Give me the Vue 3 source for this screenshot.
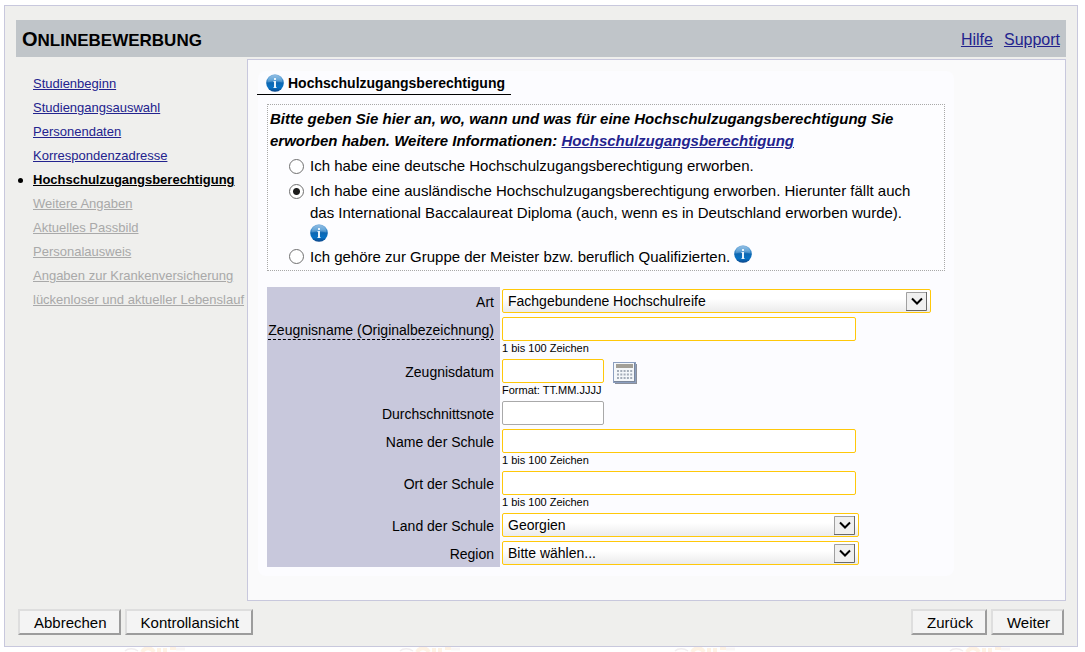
<script setup>
import { reactive, ref } from 'vue'

const steps = [
  { label: 'Studienbeginn', state: 'done' },
  { label: 'Studiengangsauswahl', state: 'done' },
  { label: 'Personendaten', state: 'done' },
  { label: 'Korrespondenzadresse', state: 'done' },
  { label: 'Hochschulzugangsberechtigung', state: 'current' },
  { label: 'Weitere Angaben', state: 'open' },
  { label: 'Aktuelles Passbild', state: 'open' },
  { label: 'Personalausweis', state: 'open' },
  { label: 'Angaben zur Krankenversicherung', state: 'open' },
  { label: 'lückenloser und aktueller Lebenslauf', state: 'open' },
]

const choices = [
  { value: 'de', text: 'Ich habe eine deutsche Hochschulzugangsberechtigung erworben.' },
  {
    value: 'int',
    text: 'Ich habe eine ausländische Hochschulzugangsberechtigung erworben. Hierunter fällt auch das International Baccalaureat Diploma (auch, wenn es in Deutschland erworben wurde).',
    info: 'below',
  },
  { value: 'job', text: 'Ich gehöre zur Gruppe der Meister bzw. beruflich Qualifizierten.', info: 'inline' },
]

const fields = [
  { id: 'art', label: 'Art', type: 'select', size: 'wide', option: 'Fachgebundene Hochschulreife' },
  { id: 'zeugnis', label: 'Zeugnisname (Originalbezeichnung)', type: 'text', size: 'long', hint: '1 bis 100 Zeichen', dotted: true },
  { id: 'datum', label: 'Zeugnisdatum', type: 'text', size: 'short', hint: 'Format: TT.MM.JJJJ', calendar: true },
  { id: 'note', label: 'Durchschnittsnote', type: 'text', size: 'short', optional: true },
  { id: 'schule', label: 'Name der Schule', type: 'text', size: 'long', hint: '1 bis 100 Zeichen' },
  { id: 'ort', label: 'Ort der Schule', type: 'text', size: 'long', hint: '1 bis 100 Zeichen' },
  { id: 'land', label: 'Land der Schule', type: 'select', size: 'medium', option: 'Georgien' },
  { id: 'region', label: 'Region', type: 'select', size: 'medium', option: 'Bitte wählen...' },
]

const choice = ref('int')
const values = reactive({
  art: 'Fachgebundene Hochschulreife',
  zeugnis: '',
  datum: '',
  note: '',
  schule: '',
  ort: '',
  land: 'Georgien',
  region: 'Bitte wählen...',
})
</script>

<template>
  <svg class="defs" width="0" height="0" aria-hidden="true">
    <defs>
      <linearGradient id="ball" x1="0" y1="0" x2="0" y2="1">
        <stop offset="0" stop-color="#7fb2de" />
        <stop offset="0.3" stop-color="#4a96d2" />
        <stop offset="0.5" stop-color="#0d67b2" />
        <stop offset="0.75" stop-color="#0872c4" />
        <stop offset="1" stop-color="#0c4488" />
      </linearGradient>
      <symbol id="info" viewBox="0 0 18 18">
        <circle cx="9" cy="9" r="8.8" fill="url(#ball)" />
        <path d="M1.5 8.5C1.5 4 5 1 9 1s7.500 3 7.500 7.500C13 7 5 7 1.500 8.500z" fill="#fff" opacity="0.18" />
        <rect x="8" y="4" width="2" height="2" fill="#e8f3fb" />
        <path d="M7.500 7H10V13H10.500V14H7.500V13H8V8H7.500z" fill="#e8f3fb" />
      </symbol>
    </defs>
  </svg>

  <form class="shell" @submit.prevent>
    <header class="bar">
      <h1>Onlinebewerbung</h1>
      <nav class="help">
        <a href="#hilfe">Hilfe</a>
        <a href="#support">Support</a>
      </nav>
    </header>

    <div class="body">
      <ul class="steps">
        <li v-for="s in steps" :key="s.label" :class="s.state">
          <a href="#schritt">{{ s.label }}</a>
        </li>
      </ul>

      <main class="content">
        <section class="card">
          <h2>
            <svg class="info"><use href="#info" /></svg>
            <span>Hochschulzugangsberechtigung</span>
          </h2>

          <fieldset class="choices">
            <p class="lead">
              Bitte geben Sie hier an, wo, wann und was für eine Hochschulzugangsberechtigung Sie erworben haben.
              Weitere Informationen: <a href="#hzb">Hochschulzugangsberechtigung</a>
            </p>
            <div v-for="c in choices" :key="c.value" class="choice">
              <input :id="'c-' + c.value" v-model="choice" type="radio" name="hzb" :value="c.value" />
              <label :for="'c-' + c.value">
                {{ c.text }}
                <svg v-if="c.info" class="info" :class="c.info"><use href="#info" /></svg>
              </label>
            </div>
          </fieldset>

          <div class="fields">
            <div v-for="f in fields" :key="f.id" class="row">
              <div class="name">
                <label :for="f.id" :class="{ dotted: f.dotted }">{{ f.label }}</label>
              </div>
              <div class="value">
                <div class="line">
                  <div v-if="f.type === 'select'" class="pick" :class="f.size">
                    <select :id="f.id" v-model="values[f.id]">
                      <option>{{ f.option }}</option>
                    </select>
                    <svg class="arrow" viewBox="0 0 21 19" aria-hidden="true">
                      <rect width="21" height="19" fill="#f0f0f0" />
                      <path d="M0.500 19V0.500H21" fill="none" stroke="#a0a0a0" />
                      <path d="M0 18.500H20.500V0" fill="none" stroke="#696969" />
                      <path d="M6 6.500L11 11.500L16 6.500" fill="none" stroke="#000" stroke-width="2" />
                    </svg>
                  </div>
                  <input
                    v-else
                    :id="f.id"
                    v-model="values[f.id]"
                    type="text"
                    :class="[f.size, { optional: f.optional }]"
                  />
                  <button v-if="f.calendar" type="button" class="calendar" aria-label="Kalender">
                    <svg viewBox="0 0 24 22" width="24" height="22">
                      <path d="M2 2H24V22H2z" fill="#8b8f99" />
                      <rect x="0.500" y="0.500" width="22" height="20" fill="#f4f7fa" stroke="#8c9fc0" />
                      <path d="M21.500 1V20M1 19.500H22" stroke="#7b879b" />
                      <rect x="3" y="2" width="17" height="4" fill="#a29f97" />
                      <path d="M4 9H20M4 12.500H20M4 16H20" stroke="#a3acb8" stroke-width="2" stroke-dasharray="2 1.300" />
                    </svg>
                  </button>
                </div>
                <small v-if="f.hint">{{ f.hint }}</small>
              </div>
            </div>
          </div>
        </section>
      </main>
    </div>

    <footer class="actions">
      <button type="button">Abbrechen</button>
      <button type="button">Kontrollansicht</button>
      <span class="gap"></span>
      <button type="button">Zurück</button>
      <button type="submit">Weiter</button>
    </footer>
  </form>

  <svg class="watermark" width="100%" height="5" aria-hidden="true">
    <defs>
      <pattern id="mark" width="275" height="5" patternUnits="userSpaceOnUse">
        <path d="M125 4C128 1 134 1 138 4" fill="none" stroke="#f1edef" stroke-width="1.500" />
        <path d="M142 5C145 0 151 0 154 5M159 1V5M165 1V5M170 1H176" fill="none" stroke="#fef2e4" stroke-width="4" />
        <path d="M176 2H185" stroke="#f9f6f6" stroke-width="3" />
      </pattern>
    </defs>
    <rect width="100%" height="5" fill="url(#mark)" />
  </svg>
</template>

<style>
body {
  background: #fff;
  overflow: hidden;
}
</style>

<style scoped>
.defs {
  position: absolute;
}
.shell {
  margin: 5px 7px 0 4px;
  padding: 14px 11px 11px;
  border: 1px solid #c8c8dd;
  background: #efefed;
  color: #000;
  font-family: "Liberation Sans", Arial, sans-serif;
  font-size: 15px;
  line-height: 22px;
}
a {
  color: #23238e;
}
.bar {
  display: flex;
  align-items: center;
  justify-content: space-between;
  height: 37px;
  box-sizing: border-box;
  padding: 2px 6px 0;
  background: #c0c5c9;
}
h1 {
  margin: 0;
  font-size: 17px;
  text-transform: uppercase;
}
h1::first-letter {
  font-size: 20px;
}
.help {
  display: flex;
  gap: 11px;
  font-size: 16px;
}
.body {
  display: flex;
  margin-top: 2px;
}
.steps {
  flex: 0 0 231px;
  box-sizing: border-box;
  margin: 0;
  padding: 13px 0 0 17px;
  list-style: none;
  font-size: 13px;
  line-height: 24px;
  white-space: nowrap;
}
.steps li {
  position: relative;
}
.open a {
  color: #a9a9a9;
}
.current a {
  color: #000;
  font-weight: bold;
}
.current::before {
  content: "";
  position: absolute;
  left: -15px;
  top: 10px;
  width: 5px;
  height: 5px;
  border-radius: 50%;
  background: #000;
}
.content {
  flex: 1;
  min-width: 0;
  padding: 11px 10px 24px;
  border: 1px solid #c8c8dd;
  background: #fafafb;
}
.card {
  max-width: 696px;
  box-sizing: border-box;
  padding-bottom: 9px;
  border-radius: 8px;
  background: #fcfcff;
}
h2 {
  display: flex;
  align-items: center;
  gap: 4px;
  width: max-content;
  box-sizing: border-box;
  height: 24px;
  margin: 0 0 9px -1px;
  padding: 0 6px 0 9px;
  border-bottom: 1px solid #000;
  font-size: 14px;
}
.info {
  width: 18px;
  height: 18px;
}
.choices {
  margin: 0 9px 16px 9px;
  padding: 3px 5px 2px 2px;
  border: 1px dotted #a8a8a8;
  background: #fdfdff;
}
.lead {
  margin: 0 0 3px;
  font-weight: bold;
  font-style: italic;
}
.choice {
  display: flex;
  gap: 6px;
  margin-bottom: 3px;
  padding: 0 3px 0 19px;
}
.choice:last-child {
  margin-bottom: 0;
}
.choice input {
  appearance: none;
  flex: none;
  width: 15px;
  height: 15px;
  margin: 4px 0 0;
  border: 1px solid #707070;
  border-radius: 50%;
  background: #fff;
}
.choice input:checked {
  background: radial-gradient(circle, #1c1c1c 3px, #fff 4px);
}
.info.below {
  display: block;
}
.info.inline {
  vertical-align: -1px;
}
.row {
  display: flex;
  margin-left: 9px;
}
.name {
  flex: 0 0 233px;
  box-sizing: border-box;
  padding: 4px 6px 0 0;
  background: #c8c8dc;
  text-align: right;
  font-size: 14px;
  line-height: 22px;
}
.dotted {
  display: inline-block;
  line-height: 17px;
  border-bottom: 1px dashed #000;
}
.value {
  flex: 1;
  min-width: 0;
  padding: 2px 0 2px 2px;
}
.line {
  display: flex;
  align-items: center;
  height: 24px;
}
input[type="text"],
select {
  appearance: none;
  box-sizing: border-box;
  height: 24px;
  margin: 0;
  padding: 0 5px;
  border: 1px solid #ffc80a;
  border-radius: 2px;
  background: #fff;
  color: #000;
  font: 14px "Liberation Sans", Arial, sans-serif;
}
input[type="text"].optional {
  border-color: #a9a9a9;
}
select {
  width: 100%;
  background: linear-gradient(#fff 40%, #ebebeb);
}
.pick {
  position: relative;
}
.arrow {
  position: absolute;
  top: 3px;
  right: 4px;
  width: 21px;
  height: 19px;
  pointer-events: none;
}
.wide {
  width: 429px;
}
.medium {
  width: 357px;
}
.long {
  width: 354px;
}
.short {
  width: 102px;
}
.calendar {
  display: flex;
  margin: 3px 0 0 9px;
  padding: 0;
  border: 0;
  background: none;
}
small {
  display: block;
  height: 14px;
  font-size: 11px;
  line-height: 14px;
}
.actions {
  display: flex;
  gap: 4px;
  margin-top: 8px;
  padding: 0 2px;
}
.gap {
  flex: 1;
}
.actions button {
  height: 26px;
  padding: 0 12px 0 14px;
  border: 2px solid;
  border-color: #dedede #9c9c9c #9c9c9c #dedede;
  background: #f4f4f4;
  color: #000;
  font: 15px "Liberation Sans", Arial, sans-serif;
}
.watermark {
  display: block;
}
</style>
